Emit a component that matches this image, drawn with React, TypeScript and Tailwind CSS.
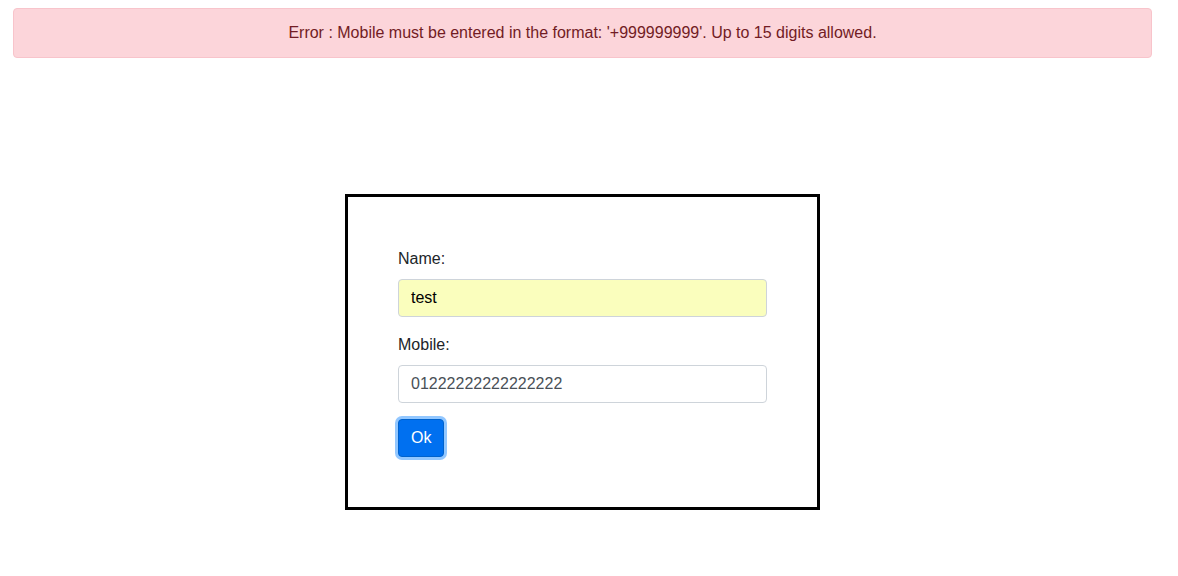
import { useState } from "react";

export default function App() {
    const [name, setName] = useState("test");
    const [mobile, setMobile] = useState("01222222222222222");

    return <div className="w-[1165px] bg-white font-['Liberation_Sans',Arial,sans-serif] text-[16px] leading-6 text-[#212529]">
        <div className="mx-[13px] mt-2 rounded-[4px] border border-[#f8c4cb] bg-[#fcd5da] px-5 py-3 text-center text-[#721c24]">
            Error : Mobile must be entered in the format: '+999999999'. Up to 15 digits allowed.
        </div>

        <div className="mx-auto mt-[136px] w-[475px] border-[3px] border-black p-[50px]">
            <form onSubmit={(e) => e.preventDefault()}>
                <div className="mb-4">
                    <label htmlFor="name" className="mb-2 block">Name:</label>
                    <input
                        id="name"
                        type="text"
                        value={name}
                        onChange={(e) => setName(e.target.value)}
                        className="block h-[38px] w-full rounded-[4px] border border-[#ced4da] bg-[#fafebd] px-3 py-1.5 text-black outline-none"
                    />
                </div>
                <div className="mb-4">
                    <label htmlFor="mobile" className="mb-2 block">Mobile:</label>
                    <input
                        id="mobile"
                        type="text"
                        value={mobile}
                        onChange={(e) => setMobile(e.target.value)}
                        className="block h-[38px] w-full rounded-[4px] border border-[#ced4da] bg-white px-3 py-1.5 text-[#495057] outline-none"
                    />
                </div>
                <button
                    type="submit"
                    className="h-[38px] rounded-[4px] border border-[#0062cc] bg-[#0070f0] px-3 text-white shadow-[0_0_0_3px_rgba(38,143,255,0.5)]"
                >
                    Ok
                </button>
            </form>
        </div>
    </div>
}
